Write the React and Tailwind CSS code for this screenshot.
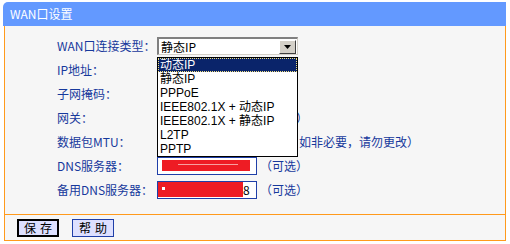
import React from 'react';

const labelCls = 'w-[100px] shrink-0 text-[12px] text-[#17399c]';

function Row({ label, children }) {
    return (
        <div className="flex h-[24px] items-center">
            <div className={labelCls}>{label}</div>
            {children}
        </div>
    );
}

function Box({ children }) {
    return (
        <div className="w-[100px] h-[18px] shrink-0 border border-[#1f3fa8] bg-white relative overflow-hidden">
            {children}
        </div>
    );
}

const options = ['动态IP', '静态IP', 'PPPoE', 'IEEE802.1X + 动态IP', 'IEEE802.1X + 静态IP', 'L2TP', 'PPTP'];

export default function App() {
    return (
        <div className="w-[510px] h-[244px] bg-white font-['Noto_Sans_CJK_SC',sans-serif] leading-[14px] relative">
            {/* header bar */}
            <div className="ml-[3px] mt-[2px] w-[503px] h-[24px] bg-[#6399ff] rounded-tl-[5px] flex items-center pl-[7px]">
                <span className="text-white text-[12px]">WAN口设置</span>
            </div>

            {/* form body */}
            <div className="ml-[4px] w-[502px] border-x border-[#ff9a1c] bg-[#f6f6f6]">
                <div className="pl-[52px] pt-[8px] pb-[12px] border-b border-[#ff9a1c] relative">
                    <Row label="WAN口连接类型：">
                        <div className="w-[141px] h-[18px] bg-white border-t-2 border-l-2 border-t-[#808080] border-l-[#808080] border-b border-r border-b-[#d4d0c8] border-r-[#d4d0c8] flex items-center">
                            <span className="pl-[2px] text-[12px] text-black flex-1">静态IP</span>
                            <div className="w-[17px] h-[14px] mr-[1px] bg-[#d4d0c8] border border-t-white border-l-white border-b-[#404040] border-r-[#404040] flex items-center justify-center">
                                <svg width="7" height="4" viewBox="0 0 7 4"><path d="M0 0h7L3.5 4z" fill="#000" /></svg>
                            </div>
                        </div>
                    </Row>
                    <Row label="IP地址："><Box /></Row>
                    <Row label="子网掩码："><Box /></Row>
                    <Row label="网关：">
                        <Box />
                        {/* only the closing bracket of the hint shows past the open list */}
                        <span className="ml-[39px] text-[12px] text-[#17399c]">）</span>
                    </Row>
                    <Row label="数据包MTU：">
                        <Box />
                        <span className="ml-[42px] text-[12px] text-[#17399c] whitespace-nowrap">如非必要，请勿更改）</span>
                    </Row>
                    <Row label="DNS服务器：">
                        <Box>
                            <div className="absolute left-[4px] top-[2px] w-[88px] h-[11px] bg-[#ee1c24]" />
                            <div className="absolute left-[20px] top-[6px] w-[60px] h-px bg-[#f7a0a0]" />
                        </Box>
                        <span className="ml-[3px] text-[12px] text-[#17399c]">（可选）</span>
                    </Row>
                    <Row label="备用DNS服务器：">
                        <Box>
                            <div className="absolute left-0 top-0 w-[85px] h-[15px] bg-[#ee1c24]" />
                            <div className="absolute left-[4px] top-[5px] w-[3px] h-[3px] bg-white" />
                            <span className="absolute left-[85px] top-[1px] text-[12px] text-black">8</span>
                        </Box>
                        <span className="ml-[3px] text-[12px] text-[#17399c]">（可选）</span>
                    </Row>

                    {/* open dropdown list */}
                    <div className="absolute left-[152px] top-[31px] w-[141px] border border-black bg-white font-['Liberation_Sans','Noto_Sans_CJK_SC',sans-serif]">
                        {options.map((o, i) => (
                            <div
                                key={o}
                                className={
                                    i === 0
                                        ? 'h-[14px] leading-[12px] bg-[#0a246a] text-white text-[12px] pl-[1px] border border-dotted border-[#f0e080] flex items-center'
                                        : 'h-[14px] leading-[12px] text-black text-[12px] pl-[2px] flex items-center whitespace-nowrap'
                                }
                            >
                                {o}
                            </div>
                        ))}
                    </div>
                </div>

                {/* buttons */}
                <div className="h-[26px] flex items-center pl-[12px] gap-[13px] border-b border-[#ff9a1c]">
                    <button className="w-[42px] h-[18px] bg-[#dde0ff] border-2 border-black text-[12px] text-black tracking-[4px] flex items-center justify-center pl-[4px]">
                        保存
                    </button>
                    <button className="w-[42px] h-[18px] bg-[#dde0ff] border border-[#1f3fa8] text-[12px] text-black tracking-[4px] flex items-center justify-center pl-[4px]">
                        帮助
                    </button>
                </div>
            </div>
        </div>
    );
}
